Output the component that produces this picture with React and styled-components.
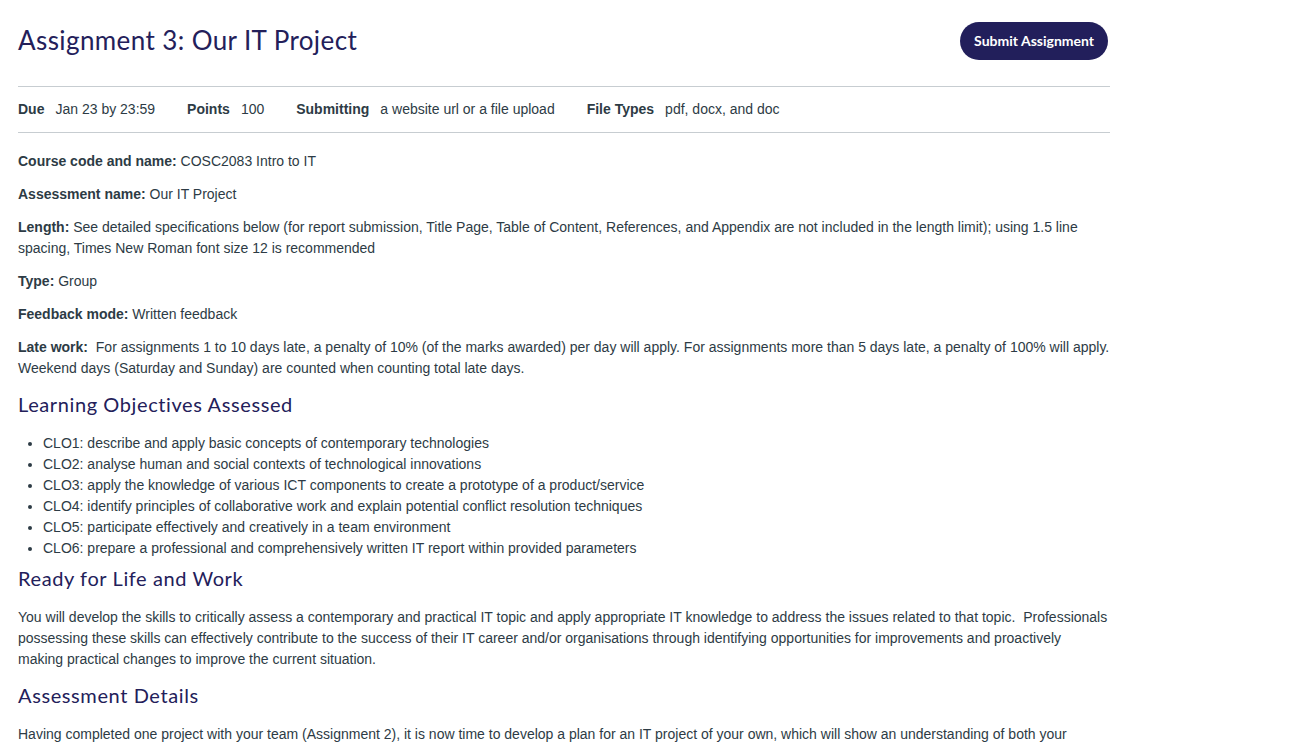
import * as React from 'react';
import styled, { createGlobalStyle } from 'styled-components';

const GlobalStyle = createGlobalStyle`
  body {
    margin: 0;
    background: #fff;
    font-family: "Liberation Sans", Arial, sans-serif;
    color: #2d3b45;
  }
`;

const Page = styled.div`
  width: 1092px;
  padding: 0 18px;
  font-size: 14px;
  line-height: 21px;
`;

const Header = styled.header`
  display: flex;
  align-items: flex-start;
  justify-content: space-between;
  padding: 22px 2px 26px 0;
`;

const Title = styled.h1`
  margin: 0;
  font-family: Lato, "Open Sans", sans-serif;
  font-weight: 400;
  font-size: 26px;
  line-height: 36px;
  letter-spacing: 0.4px;
  color: #23205a;
`;

const SubmitButton = styled.button`
  height: 38px;
  padding: 0 14px 2px;
  border: none;
  border-radius: 19px;
  background: #221f5b;
  color: #fff;
  font-family: Lato, "Open Sans", sans-serif;
  font-weight: 700;
  font-size: 14px;
  cursor: pointer;
`;

const DetailsBar = styled.div`
  display: flex;
  align-items: center;
  gap: 32px;
  height: 45px;
  border-top: 1px solid #c7cdd1;
  border-bottom: 1px solid #c7cdd1;
  margin-bottom: 18px;
`;

const Detail = styled.div`
  display: flex;
  gap: 11px;
`;

const Label = styled.span`
  font-weight: 700;
`;

const Para = styled.p`
  margin: 0 0 12px;
`;

const Heading = styled.h3`
  margin: ${({ $tight }) => ($tight ? '7px' : '13px')} 0 16px;
  font-family: Lato, "Open Sans", sans-serif;
  font-weight: 400;
  font-size: 20px;
  line-height: 25px;
  letter-spacing: 0.6px;
  color: #23205a;
`;

const List = styled.ul`
  margin: 0;
  padding-left: 25px;
`;

const details = [
  ['Due', 'Jan 23 by 23:59'],
  ['Points', '100'],
  ['Submitting', 'a website url or a file upload'],
  ['File Types', 'pdf, docx, and doc'],
];

const outcomes = [
  'CLO1: describe and apply basic concepts of contemporary technologies',
  'CLO2: analyse human and social contexts of technological innovations',
  'CLO3: apply the knowledge of various ICT components to create a prototype of a product/service',
  'CLO4: identify principles of collaborative work and explain potential conflict resolution techniques',
  'CLO5: participate effectively and creatively in a team environment',
  'CLO6: prepare a professional and comprehensively written IT report within provided parameters',
];

const App = () => {
  return (
    <Page>
      <GlobalStyle />
      <Header>
        <Title>Assignment 3: Our IT Project</Title>
        <SubmitButton>Submit Assignment</SubmitButton>
      </Header>

      <DetailsBar>
        {details.map(([label, value]) => (
          <Detail key={label}>
            <Label>{label}</Label>
            <span>{value}</span>
          </Detail>
        ))}
      </DetailsBar>

      <Para>
        <Label>Course code and name:</Label> COSC2083 Intro to IT
      </Para>
      <Para>
        <Label>Assessment name:</Label> Our IT Project
      </Para>
      <Para>
        <Label>Length:</Label> See detailed specifications below (for report submission, Title Page, Table
        of Content, References, and Appendix are not included in the length limit); using 1.5 line spacing,
        Times New Roman font size 12 is recommended
      </Para>
      <Para>
        <Label>Type:</Label> Group
      </Para>
      <Para>
        <Label>Feedback mode:</Label> Written feedback
      </Para>
      <Para>
        <Label>Late work:</Label>&nbsp; For assignments 1 to 10 days late, a penalty of 10% (of the marks
        awarded) per day will apply. For assignments more than 5 days late, a penalty of 100% will apply.
        Weekend days (Saturday and Sunday) are counted when counting total late days.
      </Para>

      <Heading>Learning Objectives Assessed</Heading>
      <List>
        {outcomes.map((o) => (
          <li key={o}>{o}</li>
        ))}
      </List>

      <Heading $tight>Ready for Life and Work</Heading>
      <Para>
        You will develop the skills to critically assess a contemporary and practical IT topic and apply
        appropriate IT knowledge to address the issues related to that topic.&nbsp; Professionals possessing
        these skills can effectively contribute to the success of their IT career and/or organisations
        through identifying opportunities for improvements and proactively making practical changes to
        improve the current situation.
      </Para>

      <Heading>Assessment Details</Heading>
      <Para>
        Having completed one project with your team (Assignment 2), it is now time to develop a plan for an
        IT project of your own, which will show an understanding of both your
      </Para>
    </Page>
  );
};

export default App;
